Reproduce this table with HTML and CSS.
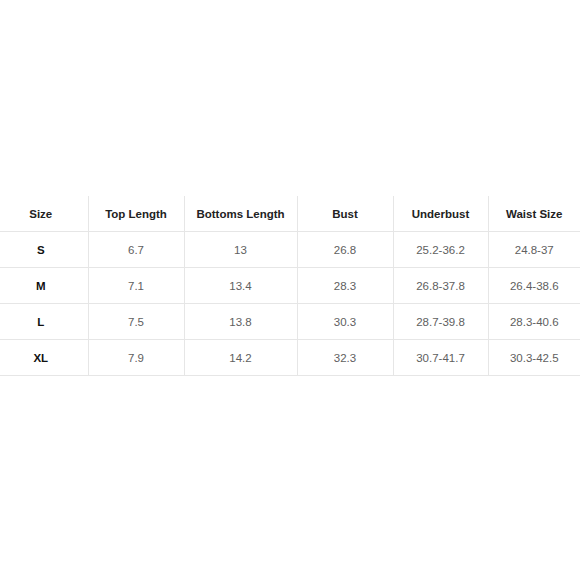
FILE: index.html
```html
<!DOCTYPE html>
<html>
<head>
<meta charset="utf-8">
<link rel="stylesheet" href="styles.css">
</head>
<body>
<div class="page">
  <table class="size-table">
    <colgroup>
      <col class="c1"><col class="c2"><col class="c3"><col class="c4"><col class="c5"><col class="c6">
    </colgroup>
    <thead>
      <tr><th>Size</th><th>Top Length</th><th>Bottoms Length</th><th>Bust</th><th>Underbust</th><th>Waist Size</th></tr>
    </thead>
    <tbody>
      <tr><td class="sz">S</td><td>6.7</td><td>13</td><td>26.8</td><td>25.2-36.2</td><td>24.8-37</td></tr>
      <tr><td class="sz">M</td><td>7.1</td><td>13.4</td><td>28.3</td><td>26.8-37.8</td><td>26.4-38.6</td></tr>
      <tr><td class="sz">L</td><td>7.5</td><td>13.8</td><td>30.3</td><td>28.7-39.8</td><td>28.3-40.6</td></tr>
      <tr><td class="sz">XL</td><td>7.9</td><td>14.2</td><td>32.3</td><td>30.7-41.7</td><td>30.3-42.5</td></tr>
    </tbody>
  </table>
</div>
</body>
</html>
```
FILE: styles.css
```css
html, body {
  margin: 0;
  padding: 0;
  background: #ffffff;
}
.page {
  width: 580px;
  height: 580px;
  padding-top: 196px;
  box-sizing: border-box;
  font-family: "Liberation Sans", Arial, sans-serif;
}
.size-table {
  width: 580px;
  border-collapse: collapse;
  table-layout: fixed;
}
.c1 { width: 88px; }
.c2 { width: 96px; }
.c3 { width: 113px; }
.c4 { width: 96px; }
.c5 { width: 95px; }
.c6 { width: 92px; }
.size-table th,
.size-table td {
  padding: 0;
  text-align: center;
  border-left: 1px solid #e6e6e6;
  border-bottom: 1px solid #e6e6e6;
  font-size: 11.5px;
}
.size-table th:first-child,
.size-table td:first-child {
  border-left: none;
  padding-right: 6px;
}
.size-table th {
  height: 35px;
  font-weight: bold;
  color: #222222;
}
.size-table td {
  height: 35px;
  color: #606060;
}
.size-table td.sz {
  font-weight: bold;
  color: #111111;
}
```
